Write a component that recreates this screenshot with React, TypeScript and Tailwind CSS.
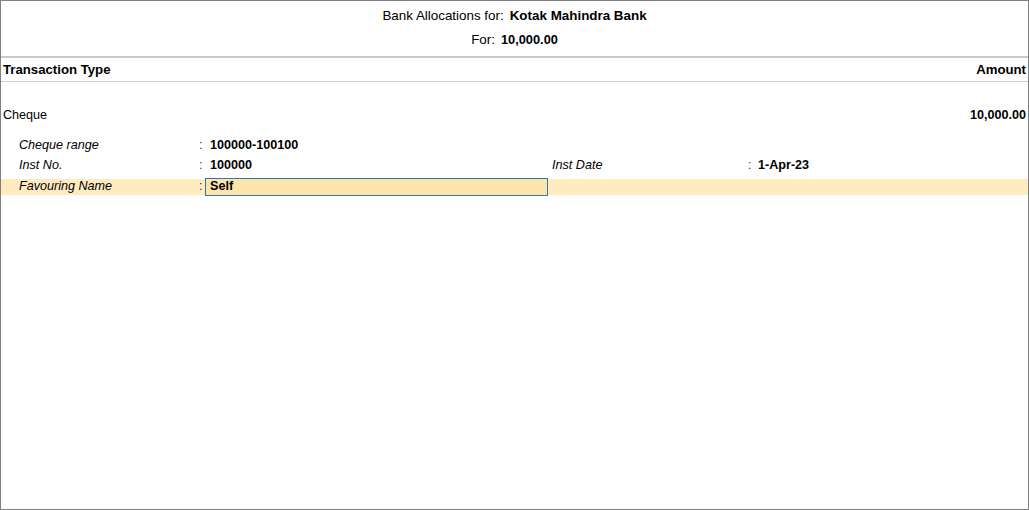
export default function App() {
  return (
    <div className="w-[1029px] h-[510px] bg-white border border-[#808080] text-[12.6px] text-black font-['Liberation_Sans',Arial,sans-serif] flex flex-col">
      {/* Title */}
      <div className="pt-[3px] pb-[4px] border-b-2 border-[#c8c8c8] text-[13.4px]">
        <div className="h-6 flex items-center justify-center">
          <span>Bank Allocations for:</span>
          <span className="ml-[6px] font-bold">Kotak Mahindra Bank</span>
        </div>
        <div className="h-6 flex items-center justify-center">
          <span>For:</span>
          <span className="ml-[6px] font-bold text-[12.8px]">10,000.00</span>
        </div>
      </div>

      {/* Column header */}
      <div className="h-[24px] flex items-center justify-between px-[2px] border-b border-[#d0d0d0] font-bold text-[13.2px]">
        <span>Transaction Type</span>
        <span>Amount</span>
      </div>

      {/* Cheque row */}
      <div className="mt-[23px] h-[20px] flex items-center justify-between px-[2px]">
        <span>Cheque</span>
        <span className="font-bold">10,000.00</span>
      </div>

      {/* Details */}
      <div className="mt-[10px] flex flex-col">
        <div className="h-[20px] flex items-center pl-[18px]">
          <span className="w-[180px] italic">Cheque range</span>
          <span className="w-[6px] text-[#333]">:</span>
          <span className="pl-[5px] font-bold">100000-100100</span>
        </div>
        <div className="h-[20px] flex items-center pl-[18px]">
          <span className="w-[180px] italic">Inst No.</span>
          <span className="w-[6px] text-[#333]">:</span>
          <span className="w-[347px] pl-[5px] font-bold">100000</span>
          <span className="w-[196px] italic">Inst Date</span>
          <span className="w-[6px] text-[#333]">:</span>
          <span className="pl-[4px] font-bold">1-Apr-23</span>
        </div>
        <div className="mt-[4px] h-[16px] flex items-center pl-[18px] bg-[#feebc0]">
          <span className="w-[180px] pb-[2px] italic">Favouring Name</span>
          <span className="w-[6px] pb-[2px] text-[#333]">:</span>
          <div className="w-[343px] h-[18px] flex items-center pl-[4px] pb-[2px] border border-[#2a78b8] bg-[#fde4a8] font-bold">
            Self
          </div>
        </div>
      </div>
    </div>
  );
}
